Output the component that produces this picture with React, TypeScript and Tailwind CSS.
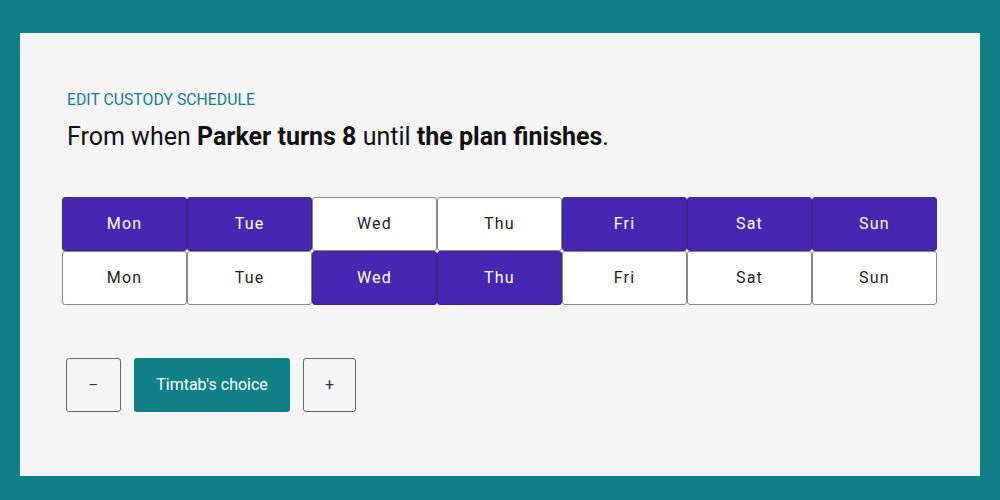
const days = ["Mon", "Tue", "Wed", "Thu", "Fri", "Sat", "Sun"];
const rows = [
  [true, true, false, false, true, true, true],
  [false, false, true, true, false, false, false],
];

export default function App() {
  return (
    <div className="w-[1000px] h-[500px] bg-[#0f8086] pt-[33px] px-[20px] pb-[24px] font-['Roboto',sans-serif]">
      <div className="h-full bg-[#f5f5f5] pl-[42px] pr-[43px] pt-[57px]">
        <div className="pl-[5px] text-[15.8px] leading-[20px] text-[#0f8086]">EDIT CUSTODY SCHEDULE</div>
        <h1 className="pl-[5px] mt-[12px] text-[25px] leading-[30px] font-normal text-[#111]">
          From when <b className="font-bold">Parker turns 8</b> until <b className="font-bold">the plan finishes</b>.
        </h1>
        <div className="mt-[45px] grid grid-cols-7">
          {rows.map((row, r) =>
            row.map((on, i) => (
              <div
                key={`${r}-${i}`}
                className={`h-[54px] flex items-center justify-center rounded-[3px] border text-[16px] tracking-[1.2px] ${
                  on ? "bg-[#4527b2] border-[#3a2a80] text-white" : "bg-white border-[#888] text-[#222]"
                }`}
              >
                {days[i]}
              </div>
            ))
          )}
        </div>
        <div className="mt-[53px] pl-[4px] flex gap-[13px]">
          <button className="w-[55px] h-[54px] rounded-[3px] border border-[#666] bg-[#f5f5f5] text-[#333] text-[15px]">–</button>
          <button className="w-[156px] h-[54px] rounded-[3px] bg-[#0f8086] text-white text-[16px]">Timtab's choice</button>
          <button className="w-[53px] h-[54px] rounded-[3px] border border-[#666] bg-[#f5f5f5] text-[#333] text-[16px]">+</button>
        </div>
      </div>
    </div>
  );
}
